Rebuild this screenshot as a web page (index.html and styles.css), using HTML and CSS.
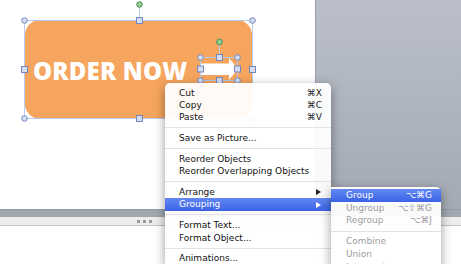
FILE: index.html
```html
<!DOCTYPE html>
<html>
<head>
  <meta charset="utf-8">
  <link rel="stylesheet" href="styles.css">
</head>
<body>
  <div class="app">
    <div class="workspace">
      <div class="slide">
        <svg class="canvas" width="316" height="210" viewBox="0 0 316 210">
          <!-- button shape -->
          <rect class="btn" x="25" y="20" width="227" height="99" rx="15" ry="15"/>
          <text class="btn-label" x="33" y="80">ORDER NOW</text>
          <path class="arrow" d="M200 63.5 H229 V58 L238 69 L229 80 V75 H200 Z"/>

          <!-- outer selection -->
          <rect class="sel" x="24.5" y="20.5" width="228" height="98"/>
          <line class="sel" x1="139.5" y1="5" x2="139.5" y2="20"/>
          <circle class="rot" cx="139.5" cy="4.5" r="2.8"/>
          <circle class="hd" cx="24.5" cy="20.5" r="2.8"/>
          <circle class="hd" cx="252.5" cy="20.5" r="2.8"/>
          <circle class="hd" cx="24.5" cy="118.5" r="2.8"/>
          <circle class="hd" cx="252.5" cy="118.5" r="2.8"/>
          <rect class="hd" x="136.5" y="17.5" width="6" height="6"/>
          <rect class="hd" x="136.5" y="115.5" width="6" height="6"/>
          <rect class="hd" x="21.5" y="66.5" width="6" height="6"/>
          <rect class="hd" x="249.5" y="66.5" width="6" height="6"/>

          <!-- arrow selection -->
          <rect class="sel" x="200.5" y="57.5" width="37" height="23"/>
          <line class="sel" x1="219.5" y1="44" x2="219.5" y2="57"/>
          <circle class="rot" cx="219.5" cy="42" r="2.8"/>
          <circle class="hd" cx="200.5" cy="57.5" r="2.8"/>
          <circle class="hd" cx="237.5" cy="57.5" r="2.8"/>
          <circle class="hd" cx="200.5" cy="80.5" r="2.8"/>
          <circle class="hd" cx="237.5" cy="80.5" r="2.8"/>
          <rect class="hd" x="216.5" y="54.5" width="6" height="6"/>
          <rect class="hd" x="216.5" y="77.5" width="6" height="6"/>
          <rect class="hd" x="197.5" y="66" width="6" height="6"/>
          <rect class="hd" x="234.5" y="66" width="6" height="6"/>
        </svg>
      </div>
      <div class="pasteboard"></div>
    </div>
    <div class="below-slide"></div>
    <div class="splitter">
      <span class="grip"></span><span class="grip"></span><span class="grip"></span>
    </div>
    <div class="notes"></div>

    <!-- context menu -->
    <div class="menu">
      <div class="item"><span>Cut</span><span class="key">⌘X</span></div>
      <div class="item"><span>Copy</span><span class="key">⌘C</span></div>
      <div class="item"><span>Paste</span><span class="key">⌘V</span></div>
      <div class="sep"></div>
      <div class="item"><span>Save as Picture...</span></div>
      <div class="sep"></div>
      <div class="item"><span>Reorder Objects</span></div>
      <div class="item"><span>Reorder Overlapping Objects</span></div>
      <div class="sep"></div>
      <div class="item"><span>Arrange</span><span class="tri"></span></div>
      <div class="item active"><span>Grouping</span><span class="tri"></span></div>
      <div class="sep"></div>
      <div class="item"><span>Format Text...</span></div>
      <div class="item"><span>Format Object...</span></div>
      <div class="sep"></div>
      <div class="item"><span>Animations...</span></div>
    </div>

    <div class="menu submenu">
      <div class="item active"><span>Group</span><span class="key">⌥⌘G</span></div>
      <div class="item off"><span>Ungroup</span><span class="key">⌥⇧⌘G</span></div>
      <div class="item off"><span>Regroup</span><span class="key">⌥⌘J</span></div>
      <div class="sep"></div>
      <div class="item off"><span>Combine</span></div>
      <div class="item off"><span>Union</span></div>
      <div class="item off"><span>Intersect</span></div>
    </div>
  </div>
</body>
</html>
```

FILE: styles.css
```css
/* page */
html, body {
  margin: 0;
  padding: 0;
}
body {
  width: 461px;
  height: 264px;
  overflow: hidden;
  background: #fff;
  font-family: "DejaVu Sans", Verdana, sans-serif;
}
.app {
  position: relative;
  width: 461px;
  height: 264px;
  overflow: hidden;
}

/* slide + pasteboard */
.workspace {
  display: flex;
  height: 209px;
}
.slide {
  width: 315px;
  background: #fff;
  border-right: 1px solid #99a0aa;
}
.canvas {
  display: block;
}
.pasteboard {
  flex: 1;
  background: linear-gradient(#babfc9, #a4aab4);
}
.below-slide {
  height: 8px;
  background: #a0a7b1;
  border-top: 1px solid #959ca6;
  box-sizing: border-box;
}
.splitter {
  height: 8px;
  background: #ededed;
  border-bottom: 1px solid #c2c2c2;
  display: flex;
  align-items: center;
  gap: 3px;
  padding-left: 137px;
}
.grip {
  width: 3px;
  height: 3px;
  background: #9a9a9a;
}
.notes {
  height: 40px;
  background: #fff;
}

/* shapes */
.btn {
  fill: #f6a55e;
}
.btn-label {
  fill: #fff;
  font-family: "Open Sans", sans-serif;
  font-weight: 800;
  font-size: 24px;
  letter-spacing: 0.2px;
}
.arrow {
  fill: #fff;
}
.sel {
  fill: none;
  stroke: #b7cbec;
  stroke-width: 1;
}
.hd {
  fill: #d5def0;
  stroke: #7587bd;
  stroke-width: 1;
}
.rot {
  fill: #8fd08f;
  stroke: #4c8a5a;
  stroke-width: 1;
}

/* context menu */
.menu {
  position: absolute;
  left: 165px;
  top: 83px;
  width: 166px;
  padding-top: 3.5px;
  background: rgba(255, 255, 255, 0.94);
  border-radius: 5px 5px 0 0;
  box-shadow: 0 3px 11px rgba(0, 0, 0, 0.4);
  font-size: 9px;
  color: #111;
}
.item {
  height: 12.3px;
  line-height: 12.3px;
  padding: 0 9px 0 14px;
  display: flex;
  justify-content: space-between;
  align-items: center;
  white-space: nowrap;
}
.item.active {
  background: linear-gradient(#6388f3, #3a62e6);
  color: #fff;
}
.item.off {
  color: #9c9c9c;
}
.key {
  font-size: 9px;
  color: #222;
}
.item.active .key {
  color: #fff;
}
.item.off .key {
  color: #9c9c9c;
}
.tri {
  width: 0;
  height: 0;
  border-left: 5px solid #222;
  border-top: 3.5px solid transparent;
  border-bottom: 3.5px solid transparent;
  margin-right: 1px;
}
.item.active .tri {
  border-left-color: #fff;
}
.sep {
  height: 8.6px;
  display: flex;
  align-items: center;
}
.sep::after {
  content: "";
  flex: 1;
  height: 1px;
  background: #e2e2e2;
}

.submenu {
  left: 331px;
  top: 187px;
  width: 110px;
  padding-top: 2px;
  border-radius: 0 5px 0 0;
}
.submenu .item {
  height: 12.6px;
  line-height: 12.6px;
  padding: 0 9px 0 15px;
}
```
